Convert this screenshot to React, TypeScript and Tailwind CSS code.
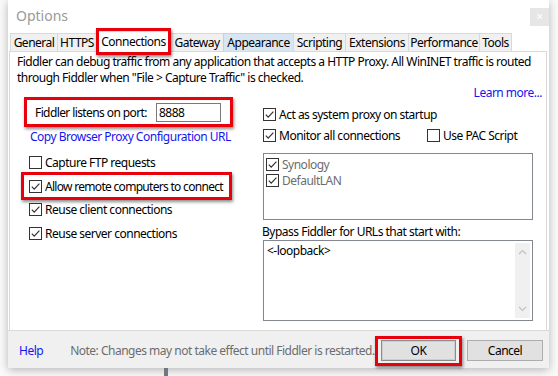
import React from 'react';

type Tab = { label: string; w: number; selected?: boolean; hover?: boolean };

const tabs: Tab[] = [
  { label: 'General', w: 48 },
  { label: 'HTTPS', w: 40 },
  { label: 'Connections', w: 75, selected: true },
  { label: 'Gateway', w: 54 },
  { label: 'Appearance', w: 71, hover: true },
  { label: 'Scripting', w: 53 },
  { label: 'Extensions', w: 64 },
  { label: 'Performance', w: 72 },
  { label: 'Tools', w: 33 },
];

function Check({ checked }: { checked?: boolean }) {
  return (
    <span className="w-[13px] h-[13px] border border-[#333333] bg-white flex items-center justify-center shrink-0">
      {checked && (
        <svg width="11" height="11" viewBox="0 0 11 11">
          <path d="M1.8 5.6 L4.2 8.2 L9.4 2.6" stroke="#333333" strokeWidth="1.2" fill="none" />
        </svg>
      )}
    </span>
  );
}

function CheckRow({ label, checked, className = '' }: { label: string; checked?: boolean; className?: string }) {
  return (
    <div className={`flex items-center gap-[3px] h-[16px] ${className}`}>
      <Check checked={checked} />
      <span className="leading-[15px] whitespace-nowrap">{label}</span>
    </div>
  );
}

export default function App() {
  return (
    <div className="w-[558px] h-[376px] bg-[#fafafa] overflow-hidden font-['Noto_Sans',sans-serif] text-[12px] text-black tracking-[-0.5px]">
      <div className="ml-[8px] w-[541px] h-[368px] bg-white shadow-[0_2px_9px_rgba(0,0,0,0.28)] flex flex-col">
        {/* title bar */}
        <div className="h-[31px] flex justify-between shrink-0">
          <span className="pl-[8px] pt-[6px] text-[14px] leading-[20px] text-[#9a9a9a] tracking-normal">Options</span>
          <span className="mt-[8px] w-[19px] h-[18px] bg-[#e6e6e6] text-white flex items-center justify-center text-[12px] leading-none">×</span>
        </div>

        {/* tabs */}
        <div className="h-[20px] flex items-end pl-[2px] shrink-0">
          {tabs.map((t) =>
            t.selected ? (
              <div key={t.label} className="relative h-[21px] -mb-[1px] -ml-[1px] z-10 bg-white border border-b-0 border-[#d9d9d9] flex items-center justify-center" style={{ width: t.w }}>
                <span className="leading-[15px] -mt-[2px]">{t.label}</span>
                <span className="absolute -left-[1px] -right-[1px] -top-[4px] -bottom-[3px] border-[3px] border-[#e8000b] shadow-[1px_2px_3px_rgba(0,0,0,0.45)]" />
              </div>
            ) : (
              <div
                key={t.label}
                className={`h-[18px] border border-b-0 -ml-[1px] first:ml-0 flex items-center justify-center ${t.hover ? 'bg-[#d8e6f2] border-[#b9d3eb]' : 'bg-[#f0f0f0] border-[#d9d9d9]'}`}
                style={{ width: t.w }}
              >
                <span className="leading-[15px] whitespace-nowrap">{t.label}</span>
              </div>
            )
          )}
        </div>

        {/* panel */}
        <div className="ml-[1px] mr-[2px] h-[280px] border border-[#d9d9d9] bg-white pt-[2px] pl-[7px] pr-[4px] shrink-0">
          <div className="leading-[16px] whitespace-nowrap">
            Fiddler can debug traffic from any application that accepts a HTTP Proxy. All WinINET traffic is routed
          </div>
          <div className="leading-[16px] whitespace-nowrap">through Fiddler when "File &gt; Capture Traffic" is checked.</div>
          <div className="flex justify-end leading-[15px] text-[#1515f0] -mt-[1px]">Learn more...</div>

          <div className="flex -mt-[3px] pl-[4px]">
            {/* left column */}
            <div className="w-[212px] flex flex-col">
              <div className="ml-[3px] w-[209px] h-[30px] border-[3px] border-[#e8000b] shadow-[1px_2px_3px_rgba(0,0,0,0.45)] flex items-center pl-[8px] pr-[9px]">
                <span className="whitespace-nowrap leading-[15px] tracking-[-0.6px]">Fiddler listens on port:</span>
                <span className="ml-auto w-[65px] h-[19px] border border-[#7a7a7a] pl-[2px] flex items-center leading-[15px]">8888</span>
              </div>
              <span className="ml-[9px] mt-[2px] leading-[15px] text-[#1515f0] whitespace-nowrap">Copy Browser Proxy Configuration URL</span>
              <CheckRow label="Capture FTP requests" className="ml-[8px] mt-[10px]" />
              <div className="mt-[2px] w-[211px] h-[28px] border-[3px] border-[#e8000b] shadow-[1px_2px_3px_rgba(0,0,0,0.45)] flex items-center pl-[5px] tracking-[-0.7px]">
                <CheckRow label="Allow remote computers to connect" checked />
              </div>
              <CheckRow label="Reuse client connections" checked className="ml-[8px] mt-[1px]" />
              <CheckRow label="Reuse server connections" checked className="ml-[8px] mt-[8px]" />
            </div>

            {/* right column */}
            <div className="ml-[30px] w-[270px] flex flex-col">
              <CheckRow label="Act as system proxy on startup" checked className="mt-[9px]" />
              <div className="flex mt-[5px]">
                <CheckRow label="Monitor all connections" checked className="w-[164px]" />
                <CheckRow label="Use PAC Script" />
              </div>
              <div className="mt-[10px] h-[67px] border border-[#828790] pt-[2px] pl-[2px] text-[#6d6d6d]">
                <CheckRow label="Synology" checked />
                <CheckRow label="DefaultLAN" checked />
              </div>
              <span className="mt-[4px] -ml-[1px] leading-[15px] whitespace-nowrap">Bypass Fiddler for URLs that start with:</span>
              <div className="mt-[1px] h-[81px] border border-[#828790] flex">
                <span className="flex-1 pl-[3px] pt-[2px] leading-[15px]">&lt;-loopback&gt;</span>
                <div className="w-[15px] my-[2px] mr-[2px] bg-[#f0f0f0] flex flex-col justify-between items-center py-[6px]">
                  <svg width="9" height="6" viewBox="0 0 9 6">
                    <path d="M1 5 L4.5 1.5 L8 5" stroke="#c2c2c2" strokeWidth="1.2" fill="none" />
                  </svg>
                  <svg width="9" height="6" viewBox="0 0 9 6">
                    <path d="M1 1 L4.5 4.5 L8 1" stroke="#c2c2c2" strokeWidth="1.2" fill="none" />
                  </svg>
                </div>
              </div>
            </div>
          </div>
        </div>

        {/* footer */}
        <div className="flex-1 bg-[#f0f0f0] border-t border-[#dadada] -mt-[1px] flex items-center pl-[11px] pr-[6px] pt-[2px]">
          <span className="text-[#1515f0] leading-[15px]">Help</span>
          <span className="ml-[27px] text-[#6d6d6d] leading-[15px] whitespace-nowrap">Note: Changes may not take effect until Fiddler is restarted.</span>
          <div className="ml-auto w-[87px] h-[30px] border-[3px] border-[#e8000b] shadow-[1px_2px_3px_rgba(0,0,0,0.45)] flex items-center justify-center">
            <span className="w-[75px] h-[21px] bg-[#e1e1e1] border border-[#8c8c8c] shadow-[inset_0_0_0_1px_#cfcfcf] flex items-center justify-center leading-[15px]">OK</span>
          </div>
          <span className="ml-[5px] w-[76px] h-[21px] bg-[#e1e1e1] border border-[#adadad] flex items-center justify-center leading-[15px]">Cancel</span>
        </div>
      </div>
      <div className="ml-[164px] w-[4px] h-[8px] bg-[#6f7880]" />
    </div>
  );
}
